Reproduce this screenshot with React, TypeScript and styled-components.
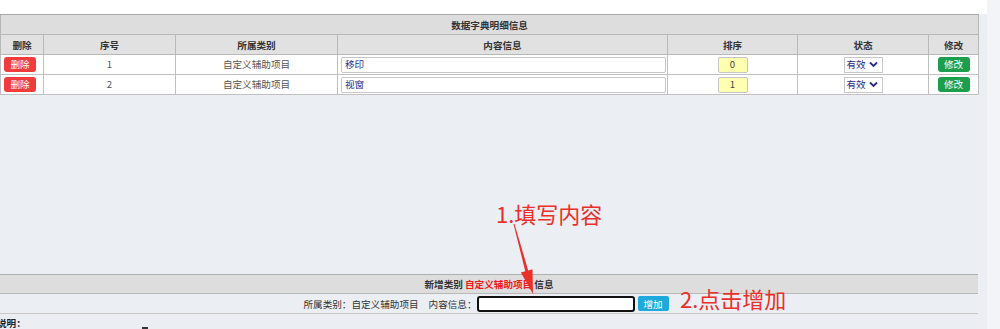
import React from "react";
import styled, { createGlobalStyle } from "styled-components";

const Global = createGlobalStyle`
  html, body { margin: 0; padding: 0; }
  body {
    background: #ebeef3;
    font-family: "Noto Sans CJK SC", "Noto Sans", sans-serif;
    overflow: hidden;
  }
`;

const Shell = styled.div`
  display: flex;
  width: 1000px;
  height: 329px;
  overflow: hidden;
`;

const Page = styled.div`
  position: relative;
  width: 987px;
  flex: none;
  background: #ebeef3;
`;

const Track = styled.div`
  flex: 1;
  background: #f3f4f7;
`;

const TopBand = styled.div`
  height: 14px;
  background: #ffffff;
`;

const Grid = styled.table`
  width: 978px;
  border-collapse: collapse;
  table-layout: fixed;
  font-size: 9.6px;
  border: 1px solid #b6b6b6;
  border-top-color: #a8a8a8;
`;

const CaptionCell = styled.td`
  height: 19px;
  padding: 0;
  background: #dddddd;
  color: #333;
  font-weight: 700;
  text-align: center;
  border-bottom: 1px solid #b8b8b8;
`;

const Th = styled.td`
  height: 19px;
  padding: 0;
  background: #e1e1e1;
  color: #333;
  font-weight: 700;
  text-align: center;
  border: 1px solid #b8b8b8;
`;

const Td = styled.td<{ $align?: string }>`
  height: 19px;
  padding: 0 3px;
  background: #ffffff;
  color: #555;
  text-align: ${(p) => p.$align || "center"};
  border: 1px solid #c0c0c0;
  line-height: 1;
  vertical-align: middle;
`;

const Btn = styled.span<{ $bg: string }>`
  display: inline-flex;
  align-items: center;
  justify-content: center;
  width: 32px;
  height: 15px;
  border-radius: 3px;
  background: ${(p) => p.$bg};
  color: #fff;
  font-size: 9.6px;
  vertical-align: middle;
`;

const TextBox = styled.div<{ $w: number; $bg?: string; $center?: boolean }>`
  display: inline-flex;
  align-items: center;
  justify-content: ${(p) => (p.$center ? "center" : "flex-start")};
  box-sizing: border-box;
  width: ${(p) => p.$w}px;
  height: 16px;
  padding: 0 3px;
  background: ${(p) => p.$bg || "#fff"};
  border: 1px solid #c6c6c6;
  border-radius: 2px;
  color: ${(p) => (p.$center ? "#444" : "#2b2b86")};
  font-size: 9.6px;
  vertical-align: middle;
  text-align: left;
`;

const Select = styled.div`
  display: inline-flex;
  align-items: center;
  gap: 3px;
  box-sizing: border-box;
  width: 39px;
  height: 16px;
  padding: 0 2px;
  background: #fff;
  border: 1px solid #c6c6c6;
  color: #2b2b86;
  font-size: 9.6px;
  white-space: nowrap;
  vertical-align: middle;
  svg { flex: none; }
`;

const Bottom = styled.div`
  margin-top: 179px;
  width: 978px;
  font-size: 9.6px;
`;

const BottomHead = styled.div`
  height: 18px;
  display: flex;
  align-items: center;
  justify-content: center;
  background: #dddddd;
  border-top: 1px solid #aeaeae;
  border-bottom: 1px solid #b8b8b8;
  color: #333;
  font-weight: 700;
`;

const Red = styled.span`
  color: #f01818;
`;

const FormRow = styled.div`
  height: 19px;
  display: flex;
  align-items: center;
  justify-content: center;
  padding-right: 6px;
  border-bottom: 1px solid #c8c8c8;
  color: #333;
`;

const Label = styled.span`
  margin-right: 10px;
`;

const Field = styled.div`
  box-sizing: border-box;
  width: 158px;
  height: 16px;
  border: 2px solid #111;
  border-radius: 3px;
  background: #fff;
`;

const AddBtn = styled.span`
  display: inline-flex;
  align-items: center;
  justify-content: center;
  width: 31px;
  height: 15px;
  margin-left: 3px;
  border-radius: 2px;
  background: #1ea9dc;
  color: #fff;
`;

const Note = styled.div`
  position: relative;
  margin-left: -3px;
  padding-top: 2px;
  font-size: 9.6px;
  font-weight: 700;
  color: #222;
`;

const Mark = styled.span`
  position: absolute;
  left: 145px;
  top: 13px;
  width: 6px;
  height: 3px;
  background: #333;
`;

const Annot = styled.div<{ $x: number; $y: number }>`
  position: absolute;
  left: ${(p) => p.$x}px;
  top: ${(p) => p.$y}px;
  font-size: 22px;
  line-height: 1;
  color: #ea3029;
  white-space: nowrap;
`;

const ArrowSvg = styled.svg`
  position: absolute;
  left: 0;
  top: 0;
  pointer-events: none;
`;

const Chevron = () => (
  <svg width="9" height="7" viewBox="0 0 9 7">
    <polyline points="1,1.5 4.5,5 8,1.5" fill="none" stroke="#2b2b86" strokeWidth="1.8" />
  </svg>
);

const rows = [
  { n: 1, text: "移印", sort: "0" },
  { n: 2, text: "视窗", sort: "1" },
];

export default function App() {
  return (
    <Shell>
      <Global />
      <Page>
        <TopBand />
        <Grid>
          <colgroup>
            <col style={{ width: 43 }} />
            <col style={{ width: 132 }} />
            <col style={{ width: 162 }} />
            <col style={{ width: 330 }} />
            <col style={{ width: 130 }} />
            <col style={{ width: 131 }} />
            <col style={{ width: 50 }} />
          </colgroup>
          <tbody>
            <tr>
              <CaptionCell colSpan={7}>数据字典明细信息</CaptionCell>
            </tr>
            <tr>
              <Th>删除</Th>
              <Th>序号</Th>
              <Th>所属类别</Th>
              <Th>内容信息</Th>
              <Th>排序</Th>
              <Th>状态</Th>
              <Th>修改</Th>
            </tr>
            {rows.map((r) => (
              <tr key={r.n}>
                <Td $align="left">
                  <Btn $bg="#f03c3c">删除</Btn>
                </Td>
                <Td>{r.n}</Td>
                <Td>自定义辅助项目</Td>
                <Td>
                  <TextBox $w={325}>{r.text}</TextBox>
                </Td>
                <Td>
                  <TextBox $w={30} $bg="#ffffb0" $center>
                    {r.sort}
                  </TextBox>
                </Td>
                <Td>
                  <Select>
                    有效
                    <Chevron />
                  </Select>
                </Td>
                <Td>
                  <Btn $bg="#1c9e4c">修改</Btn>
                </Td>
              </tr>
            ))}
          </tbody>
        </Grid>
        <Bottom>
          <BottomHead>
            新增类别&nbsp;<Red>自定义辅助项目</Red>&nbsp;信息
          </BottomHead>
          <FormRow>
            <Label>所属类别：自定义辅助项目</Label>
            <span>内容信息：</span>
            <Field />
            <AddBtn>增加</AddBtn>
          </FormRow>
        </Bottom>
        <Note>
          说明：
          <Mark />
        </Note>
        <Annot $x={496} $y={202}>1.填写内容</Annot>
        <Annot $x={680} $y={287}>2.点击增加</Annot>
        <ArrowSvg width="987" height="329" viewBox="0 0 987 329">
          <polygon
            points="514.5,223.9 528.2,270.4 532.5,269.2 533,294 520.9,272.4 525.3,271.2 513.5,224.1"
            fill="#ea3029"
          />
        </ArrowSvg>
      </Page>
      <Track />
    </Shell>
  );
}
